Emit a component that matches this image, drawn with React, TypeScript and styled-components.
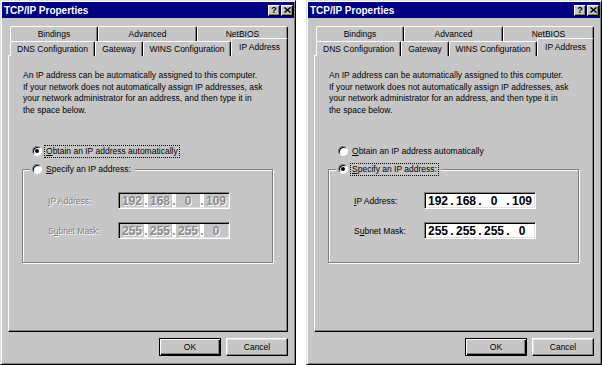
import { Fragment } from "react";
import styled, { createGlobalStyle } from "styled-components";

const GlobalStyle = createGlobalStyle`
  html, body {
    margin: 0;
    padding: 0;
    background: #fff;
  }
  body {
    font-family: "Liberation Sans", Arial, sans-serif;
    font-size: 8.5px;
    color: #000;
    overflow: hidden;
  }
`;

const backTabs = [
  { label: "Bindings", width: 88 },
  { label: "Advanced", width: 99 },
  { label: "NetBIOS", width: 91 },
];

const frontTabs = [
  { label: "DNS Configuration", width: 85 },
  { label: "Gateway", width: 48 },
  { label: "WINS Configuration", width: 88 },
];

interface DialogProps {
  auto: boolean;
}

const IpInput = (props: { octets: string[]; disabled: boolean }) => (
  <IpBox>
    {props.octets.map((o, i) => (
      <Fragment key={i}>
        {i > 0 && <Dot $disabled={props.disabled}>.</Dot>}
        <Octet $disabled={props.disabled}>{o}</Octet>
      </Fragment>
    ))}
  </IpBox>
);

const Dialog = (props: DialogProps) => {
  const off = props.auto;

  return (
    <Window>
      <TitleBar>
        <Title>TCP/IP Properties</Title>
        <CaptionButton>?</CaptionButton>
        <CaptionButton>
          <svg width="7" height="6" viewBox="0 0 7 6">
            <path d="M0.5 0.5 L6.5 5.5 M6.5 0.5 L0.5 5.5" stroke="#000" strokeWidth="1.5" />
          </svg>
        </CaptionButton>
      </TitleBar>

      <Body>
        <BackRow>
          {backTabs.map((t) => (
            <Tab key={t.label} $width={t.width}>
              {t.label}
            </Tab>
          ))}
        </BackRow>
        <FrontRow>
          {frontTabs.map((t) => (
            <Tab key={t.label} $width={t.width}>
              {t.label}
            </Tab>
          ))}
          <ActiveTab>IP Address</ActiveTab>
        </FrontRow>

        <Panel>
          <Description>
            An IP address can be automatically assigned to this computer.
            <br />
            If your network does not automatically assign IP addresses, ask
            <br />
            your network administrator for an address, and then type it in
            <br />
            the space below.
          </Description>

          <RadioRow $indent>
            <Radio $checked={props.auto} />
            <RadioLabel $focused={props.auto}>
              <u>O</u>btain an IP address automatically
            </RadioLabel>
          </RadioRow>

          <Group>
            <Legend>
              <RadioRow>
                <Radio $checked={!props.auto} />
                <RadioLabel $focused={!props.auto}>
                  <u>S</u>pecify an IP address:
                </RadioLabel>
              </RadioRow>
            </Legend>
            <Fields>
              <FieldLabel $disabled={off}>
                <u>I</u>P Address:
              </FieldLabel>
              <IpInput octets={["192", "168", "0", "109"]} disabled={off} />
              <FieldLabel $disabled={off}>
                S<u>u</u>bnet Mask:
              </FieldLabel>
              <IpInput octets={["255", "255", "255", "0"]} disabled={off} />
            </Fields>
          </Group>
        </Panel>

        <ButtonRow>
          <Button $default>OK</Button>
          <Button>Cancel</Button>
        </ButtonRow>
      </Body>
    </Window>
  );
};

const App = () => (
  <>
    <GlobalStyle />
    <Screen>
      <Dialog auto />
      <Dialog auto={false} />
    </Screen>
  </>
);

const Screen = styled.div`
  display: flex;
  gap: 10px;
  width: 602px;
  height: 365px;
  overflow: hidden;
`;

const Window = styled.div`
  flex: 0 0 296px;
  height: 365px;
  box-sizing: border-box;
  background: #c6c6c6;
  border: 1px solid;
  border-color: #dfdfdf #000 #000 #dfdfdf;
  box-shadow: inset 1px 1px #fff, inset -1px -1px #808080;
  padding: 1px;
  display: flex;
  flex-direction: column;
`;

const TitleBar = styled.div`
  height: 16px;
  background: #000080;
  display: flex;
  align-items: center;
  padding: 0 1px 0 2px;
`;

const Title = styled.div`
  flex: 1;
  color: #fff;
  font-weight: bold;
  font-size: 10px;
`;

const CaptionButton = styled.div`
  width: 12px;
  height: 11px;
  box-sizing: border-box;
  margin-left: 1px;
  background: #c6c6c6;
  border: 1px solid;
  border-color: #fff #000 #000 #fff;
  box-shadow: inset -1px -1px #808080;
  display: flex;
  align-items: center;
  justify-content: center;
  font-weight: bold;
  font-size: 9px;
  line-height: 1;
`;

const Body = styled.div`
  display: flex;
  flex-direction: column;
  padding: 8px 6px 0;
`;

const BackRow = styled.div`
  display: flex;
  margin: 0 0 -3px 2px;
  height: 15px;
`;

const FrontRow = styled.div`
  display: flex;
  align-items: flex-end;
  height: 18px;
  margin: 0 0 -1px 2px;
  position: relative;
  z-index: 1;
`;

const Tab = styled.div<{ $width: number }>`
  width: ${(p) => p.$width}px;
  height: 15px;
  box-sizing: border-box;
  background: #c6c6c6;
  border-top: 1px solid #fff;
  border-left: 1px solid #fff;
  border-right: 1px solid #000;
  box-shadow: inset -1px 0 #808080;
  border-radius: 2px 2px 0 0;
  display: flex;
  align-items: center;
  justify-content: center;
  white-space: nowrap;
`;

const ActiveTab = styled(Tab).attrs({ $width: 57 })`
  height: 18px;
  align-items: flex-start;
  padding-top: 3px;
`;

const Panel = styled.div`
  height: 277px;
  box-sizing: border-box;
  border: 1px solid;
  border-color: #fff #000 #000 #fff;
  box-shadow: inset -1px -1px #808080;
  padding: 14px 0 0 14px;
`;

const Description = styled.p`
  margin: 0;
  line-height: 11.5px;
  white-space: nowrap;
`;

const RadioRow = styled.div<{ $indent?: boolean }>`
  display: flex;
  align-items: center;
  height: 14px;
  margin-top: ${(p) => (p.$indent ? "28px" : "0")};
  padding-left: ${(p) => (p.$indent ? "9px" : "0")};
`;

const Radio = styled.span<{ $checked: boolean }>`
  width: 10px;
  height: 10px;
  box-sizing: border-box;
  border-radius: 50%;
  border: 1px solid;
  border-color: #808080 #fff #fff #808080;
  box-shadow: inset 1px 1px #000;
  background: #fff;
  display: flex;
  align-items: center;
  justify-content: center;

  &::after {
    content: "";
    width: 4px;
    height: 4px;
    border-radius: 50%;
    background: ${(p) => (p.$checked ? "#000" : "transparent")};
  }
`;

const RadioLabel = styled.span<{ $focused: boolean }>`
  margin-left: 2px;
  padding: 0 1px;
  line-height: 11px;
  border: 1px dotted ${(p) => (p.$focused ? "#000" : "transparent")};
  white-space: nowrap;
`;

const Group = styled.fieldset`
  width: 251px;
  box-sizing: border-box;
  margin: 4px 0 0 -1px;
  padding: 16px 0 23px 7px;
  border: 1px solid #808080;
  box-shadow: inset 1px 1px #fff, 1px 1px #fff;
  min-inline-size: 0;
`;

const Legend = styled.legend`
  padding: 0 2px;
  background: #c6c6c6;
`;

const Fields = styled.div`
  display: grid;
  grid-template-columns: 70px 112px;
  row-gap: 13px;
  align-items: center;
  margin-left: 18px;
`;

const FieldLabel = styled.span<{ $disabled: boolean }>`
  color: ${(p) => (p.$disabled ? "#808080" : "#000")};
  text-shadow: ${(p) => (p.$disabled ? "1px 1px 0 #fff" : "none")};
  white-space: nowrap;
`;

const IpBox = styled.div`
  width: 112px;
  height: 17px;
  box-sizing: border-box;
  background: #fff;
  border: 1px solid;
  border-color: #808080 #fff #fff #808080;
  box-shadow: inset 1px 1px #000, inset -1px -1px #dfdfdf;
  padding: 1px;
  display: flex;
`;

const Octet = styled.span<{ $disabled: boolean }>`
  width: 24px;
  display: flex;
  align-items: center;
  justify-content: center;
  font-size: 12px;
  font-weight: bold;
  background: ${(p) => (p.$disabled ? "#c6c6c6" : "#fff")};
  color: ${(p) => (p.$disabled ? "#8c8c8c" : "#000")};
  text-shadow: ${(p) => (p.$disabled ? "1px 1px 0 #fff" : "none")};
`;

const Dot = styled(Octet)`
  width: 4px;
  background: #fff;
`;

const ButtonRow = styled.div`
  display: flex;
  justify-content: flex-end;
  gap: 5px;
  margin-top: 6px;
`;

const Button = styled.div<{ $default?: boolean }>`
  width: 62px;
  height: 18px;
  box-sizing: border-box;
  display: flex;
  align-items: center;
  justify-content: center;
  border: 1px solid;
  border-color: ${(p) => (p.$default ? "#000" : "#fff #000 #000 #fff")};
  box-shadow: ${(p) =>
    p.$default
      ? "inset 1px 1px #fff, inset -1px -1px #000, inset -2px -2px #808080"
      : "inset -1px -1px #808080, inset 1px 1px #dfdfdf"};
`;

export default App;
